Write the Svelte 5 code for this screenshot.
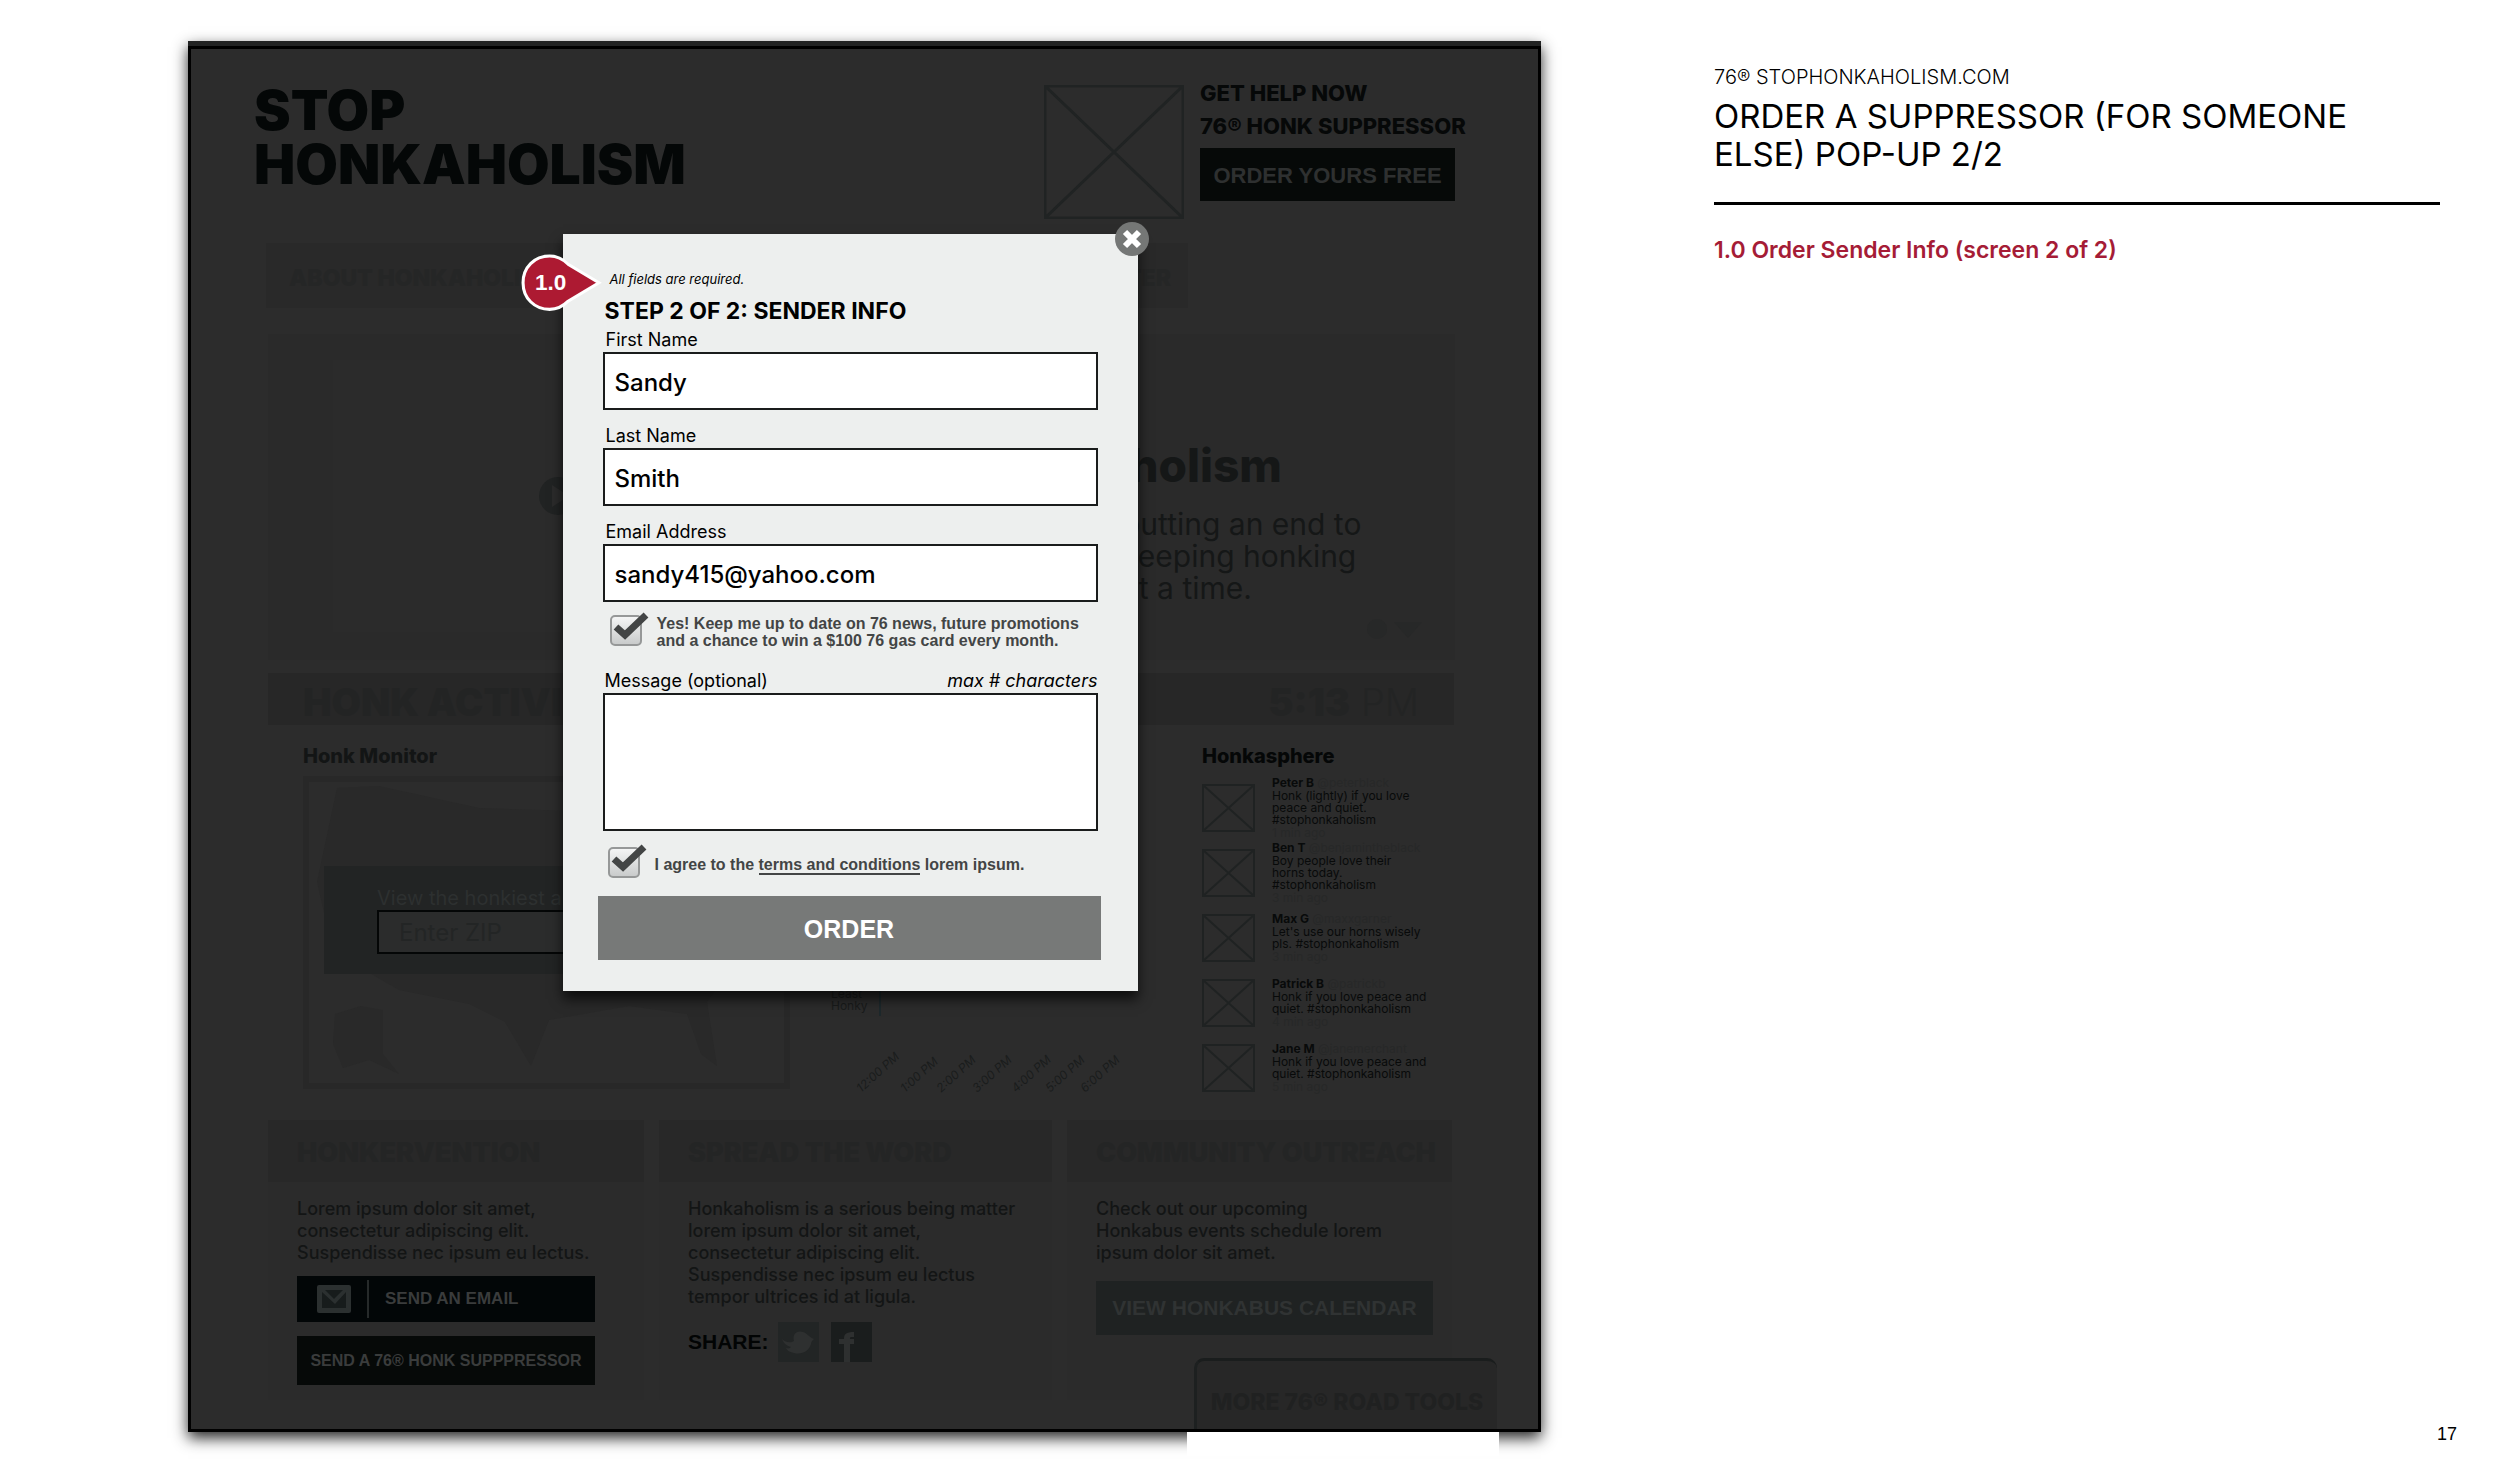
<script>
    let firstName = "Sandy";
    let lastName = "Smith";
    let email = "sandy415@yahoo.com";
    let message = "";
    let keepUpdated = true;
    let agreed = true;
    let isPopupVisible = true;

    const tweets = [
        { name: "Peter B", handle: "@peterblack", text: "Honk (lightly) if you love\npeace and quiet.\n#stophonkaholism", time: "1 min ago" },
        { name: "Ben T", handle: "@benjamintheblack", text: "Boy people love their\nhorns today.\n#stophonkaholism", time: "3 min ago" },
        { name: "Max G", handle: "@maxxgarner", text: "Let's use our horns wisely\npls. #stophonkaholism", time: "3 min ago" },
        { name: "Patrick B", handle: "@patrickb", text: "Honk if you love peace and\nquiet. #stophonkaholism", time: "4 min ago" },
        { name: "Jane M", handle: "@janemerchant", text: "Honk if you love peace and\nquiet. #stophonkaholism", time: "5 min ago" },
    ];

    const hours = [
        { x: 31, label: "12:00 PM" },
        { x: 75, label: "1:00 PM" },
        { x: 111, label: "2:00 PM" },
        { x: 147, label: "3:00 PM" },
        { x: 186, label: "4:00 PM" },
        { x: 220, label: "5:00 PM" },
        { x: 255, label: "6:00 PM" },
    ];

    function closePopup() {
        isPopupVisible = false;
    }
</script>

<main>
    <section class="board">
        <div class="strip"></div>
        <div class="page">
            <header>
                <h1>STOP<br />HONKAHOLISM</h1>
                <div class="help">
                    <svg class="placeholder" viewBox="0 0 140 134" preserveAspectRatio="none">
                        <path d="M1 1H139V133H1ZM1 1L139 133M139 1L1 133" />
                    </svg>
                    <div class="help-text">
                        <p>GET HELP NOW</p>
                        <p>76® HONK SUPPRESSOR</p>
                        <button class="dark-button order-free">ORDER YOURS FREE</button>
                    </div>
                </div>
            </header>

            <nav>
                <a href="#about">ABOUT HONKAHOLISM</a>
                <a href="#meter">HONKOMETER</a>
            </nav>

            <div class="hero">
                <div class="video">
                    <svg class="play" viewBox="0 0 40 40">
                        <circle cx="20" cy="20" r="19" />
                        <path d="M14 9L31 20L14 31Z" />
                    </svg>
                </div>
                <div class="hero-copy">
                    <h2>Honkaholism</h2>
                    <p>putting an end to<br />keeping honking<br />at a time.</p>
                    <svg class="pager" viewBox="0 0 60 22">
                        <circle cx="11" cy="11" r="10" />
                        <path d="M28 4H56L42 20Z" />
                    </svg>
                </div>
            </div>

            <div class="activity-bar">
                <span>HONK ACTIVITY</span>
                <span class="clock"><b>5:13</b> PM</span>
            </div>

            <div class="activity">
                <div>
                    <h3 class="soft">Honk Monitor</h3>
                    <div class="map">
                        <svg class="country" viewBox="0 0 475 301" preserveAspectRatio="none">
                            <path d="M28 6L70 4L170 26L300 30L450 24L458 120L420 190L398 220L408 284L392 272L378 232L320 224L240 238L222 284L196 240L160 222L90 208L24 170L8 100Z" />
                            <path d="M26 232L52 224L74 228V272L90 292L60 278L34 286L24 262Z" />
                        </svg>
                        <div class="zip">
                            <label for="zip">View the honkiest areas</label>
                            <input id="zip" placeholder="Enter ZIP" />
                        </div>
                    </div>
                </div>
                <svg class="chart" viewBox="0 0 332 356">
                    <path d="M50 60V272" />
                    <text x="1" y="254">Least</text>
                    <text x="1" y="266">Honky</text>
                    {#each hours as hour}
                        <text class="hour" transform="translate({hour.x} 349) rotate(-42)">{hour.label}</text>
                    {/each}
                </svg>
                <div>
                    <h3>Honkasphere</h3>
                    <ul class="tweets">
                        {#each tweets as tweet}
                            <li>
                                <svg class="avatar" viewBox="0 0 53 48" preserveAspectRatio="none">
                                    <path d="M1 1H52V47H1ZM1 1L52 47M52 1L1 47" />
                                </svg>
                                <div>
                                    <p><b>{tweet.name}</b> <span>{tweet.handle}</span></p>
                                    <p class="tweet-text">{tweet.text}</p>
                                    <p><span>{tweet.time}</span></p>
                                </div>
                            </li>
                        {/each}
                    </ul>
                </div>
            </div>

            <div class="cards">
                <article>
                    <h3>HONKERVENTION</h3>
                    <div class="card-body">
                        <p>Lorem ipsum dolor sit amet,<br />consectetur adipiscing elit.<br />Suspendisse nec ipsum eu lectus.</p>
                        <button class="dark-button email">
                            <svg viewBox="0 0 34 28">
                                <rect width="34" height="28" rx="2" />
                                <path d="M5 7V23H29V7L18 19Z" />
                                <path d="M8 5H26L17 14Z" />
                            </svg>
                            <span>SEND AN EMAIL</span>
                        </button>
                        <button class="dark-button send">SEND A 76® HONK SUPPPRESSOR</button>
                    </div>
                </article>
                <article>
                    <h3>SPREAD THE WORD</h3>
                    <div class="card-body">
                        <p>Honkaholism is a serious being matter<br />lorem ipsum dolor sit amet,<br />consectetur adipiscing elit.<br />Suspendisse nec ipsum eu lectus<br />tempor ultrices id at ligula.</p>
                        <div class="share">
                            <strong>SHARE:</strong>
                            <a href="#twitter" aria-label="Twitter">
                                <svg viewBox="0 0 41 40">
                                    <rect width="41" height="40" fill="#222525" />
                                    <path fill="#2e3030" d="M4 17C8 21 13 21 16 19C14 12 19 8 25 10C29 11 31 15 36 17C34 19 33 20 33 22C31 29 24 33 16 31C11 30 9 28 8 26C11 27 12 26 13 25C9 24 6 22 4 17Z" />
                                </svg>
                            </a>
                            <a href="#facebook" aria-label="Facebook">
                                <svg viewBox="0 0 41 40">
                                    <rect width="41" height="40" fill="#1a1d1d" />
                                    <path fill="#2e3030" d="M13 40V22H8V17H13C13 12 15 10 23 10V15C19 15 19 15 19 17H23V22H19V40Z" />
                                </svg>
                            </a>
                        </div>
                    </div>
                </article>
                <article>
                    <h3>COMMUNITY OUTREACH</h3>
                    <div class="card-body">
                        <p>Check out our upcoming<br />Honkabus events schedule lorem<br />ipsum dolor sit amet.</p>
                        <button class="dark-button calendar">VIEW HONKABUS CALENDAR</button>
                    </div>
                </article>
            </div>

            <a class="tools-tab" href="#tools">MORE 76® ROAD TOOLS</a>
        </div>
        <div class="tab-patch"></div>

        {#if isPopupVisible}
            <form class="popup" on:submit|preventDefault>
                <svg class="marker" viewBox="0 0 80 56">
                    <path d="M28 2C13 2 2 13 2 28S13 54 28 54C36 54 42 50 46 46L76 28L46 10C42 6 36 2 28 2Z" />
                    <text x="29" y="35">1.0</text>
                </svg>
                <button type="button" class="close" aria-label="Close" on:click={closePopup}>
                    <svg viewBox="0 0 34 34">
                        <circle cx="17" cy="17" r="17" />
                        <path d="M10 10L24 24M24 10L10 24" />
                    </svg>
                </button>

                <p class="required">All fields are required.</p>
                <h2>STEP 2 OF 2: SENDER INFO</h2>

                <div class="fields">
                    <div class="field">
                        <label for="first">First Name</label>
                        <input id="first" bind:value={firstName} />
                    </div>
                    <div class="field">
                        <label for="last">Last Name</label>
                        <input id="last" bind:value={lastName} />
                    </div>
                    <div class="field">
                        <label for="email">Email Address</label>
                        <input id="email" bind:value={email} />
                    </div>
                </div>

                <div class="check-row">
                    <div class="check">
                        <input type="checkbox" id="updates" bind:checked={keepUpdated} />
                        {#if keepUpdated}
                            <svg viewBox="0 0 40 36"><path d="M6 17L15 25L36 5" /></svg>
                        {/if}
                    </div>
                    <label for="updates">Yes! Keep me up to date on 76 news, future promotions<br />and a chance to win a $100 76 gas card every month.</label>
                </div>

                <div class="message-head">
                    <label for="message">Message (optional)</label>
                    <em>max # characters</em>
                </div>
                <textarea id="message" bind:value={message}></textarea>

                <div class="check-row agree">
                    <div class="check">
                        <input type="checkbox" id="agree" bind:checked={agreed} />
                        {#if agreed}
                            <svg viewBox="0 0 40 36"><path d="M6 17L15 25L36 5" /></svg>
                        {/if}
                    </div>
                    <label for="agree">I agree to the <a href="#terms">terms and conditions</a> lorem ipsum.</label>
                </div>

                <button class="order">ORDER</button>
            </form>
        {/if}
    </section>

    <aside>
        <p class="site">76® STOPHONKAHOLISM.COM</p>
        <h2>ORDER A SUPPRESSOR (FOR SOMEONE ELSE) POP-UP 2/2</h2>
        <p class="note">1.0 Order Sender Info (screen 2 of 2)</p>
        <p class="page-number">17</p>
    </aside>
</main>

<style>
    :global(body) {
        background: white;
    }
    main {
        display: grid;
        grid-template-columns: minmax(0, 1353fr) minmax(0, 743fr);
        column-gap: 173px;
        padding: 41px 43px 41px 188px;
        font-family: Inter, "Open Sans", sans-serif;
        color: black;
    }
    main * {
        box-sizing: border-box;
    }
    h1, h2, h3, p, ul {
        margin: 0;
        padding: 0;
    }
    a {
        color: inherit;
        text-decoration: none;
    }
    svg {
        display: block;
    }
    button {
        border: none;
        font-family: "Liberation Sans", Arial, sans-serif;
        font-weight: bold;
        white-space: nowrap;
        cursor: pointer;
    }

    /* dimmed site */
    .board {
        position: relative;
        box-shadow: 0 6px 14px rgba(0, 0, 0, 0.85);
    }
    .strip {
        height: 5px;
        background: #222323;
    }
    .page {
        position: relative;
        border: 3px solid black;
        background: #2c2c2c;
        padding: 28px 0 29px;
    }
    header {
        display: flex;
        justify-content: space-between;
        padding: 0 76px 0 63px;
    }
    h1 {
        margin-top: 6px;
        font-size: 55px;
        line-height: 54px;
        font-weight: 900;
        color: #040707;
    }
    .help {
        display: flex;
        gap: 16px;
    }
    .placeholder {
        width: 140px;
        height: 134px;
        margin-top: 8px;
    }
    .placeholder path {
        fill: none;
        stroke: #202323;
        stroke-width: 3;
    }
    .help-text {
        width: 262px;
        font-size: 22px;
        line-height: 33px;
        font-weight: 800;
        color: #060808;
        white-space: nowrap;
    }
    .dark-button {
        display: block;
        background: #060908;
        color: #3a3c3c;
        padding: 0;
    }
    .order-free {
        width: 255px;
        height: 53px;
        margin-top: 5px;
        padding-top: 3px;
        font-size: 22px;
        color: #2e3030;
    }
    nav {
        display: flex;
        justify-content: space-between;
        align-items: center;
        height: 65px;
        margin: 24px 350px 0 75px;
        padding: 4px 17px 0 23px;
        background: #292929;
        color: #252626;
        font-size: 23px;
        font-weight: 900;
    }
    .hero {
        display: flex;
        justify-content: space-between;
        height: 326px;
        margin: 26px 83px 0 77px;
        padding: 26px 0 28px 65px;
        background: #2a2a2a;
    }
    .video {
        display: flex;
        align-items: center;
        justify-content: center;
        width: 450px;
        background: #2b2b2b;
    }
    .play {
        width: 40px;
    }
    .play circle {
        fill: #212323;
    }
    .play path {
        fill: #2b2b2b;
    }
    .hero-copy {
        width: 333px;
        color: #151717;
    }
    .hero-copy h2 {
        display: flex;
        justify-content: flex-end;
        width: 160px;
        margin-top: 80px;
        font-size: 46px;
        line-height: 50px;
        font-weight: 800;
    }
    .hero-copy p {
        margin-top: 18px;
        font-size: 30px;
        line-height: 32px;
        white-space: nowrap;
    }
    .pager {
        width: 60px;
        margin: 14px 0 0 244px;
        fill: #272828;
    }
    .activity-bar {
        display: flex;
        justify-content: space-between;
        align-items: center;
        height: 52px;
        margin: 13px 84px 0 77px;
        padding: 6px 35px 0;
        background: #272727;
        color: #232424;
        font-size: 38px;
        font-weight: 900;
    }
    .clock {
        font-weight: 300;
    }
    .clock b {
        font-weight: 900;
    }
    .activity {
        display: grid;
        grid-template-columns: minmax(0, 487fr) minmax(0, 332fr) minmax(0, 252fr);
        gap: 40px;
        margin: 19px 84px 0 112px;
    }
    .activity h3 {
        font-size: 20px;
        line-height: 24px;
        font-weight: 800;
        color: #050707;
    }
    .activity .soft {
        color: #131515;
    }
    .map {
        display: grid;
        height: 313px;
        margin-top: 8px;
        border: 6px solid #282828;
    }
    .country {
        grid-area: 1 / 1;
        width: 100%;
        height: 301px;
        fill: #292929;
    }
    .zip {
        grid-area: 1 / 1;
        height: 108px;
        margin: 84px 15px 0;
        padding: 20px 53px 0;
        background: #222424;
        color: #2d3030;
        font-size: 20px;
        line-height: 24px;
    }
    .zip input {
        width: 100%;
        height: 44px;
        padding: 0 20px;
        border: 2px solid #040606;
        background: #2b2c2c;
        font: inherit;
        font-size: 24px;
    }
    .zip input::placeholder {
        color: #232525;
    }
    .chart {
        width: 100%;
        font-size: 12px;
        fill: #191b1b;
    }
    .chart path {
        stroke: #1d282b;
        stroke-width: 2;
    }
    .hour {
        font-style: italic;
        fill: #1a1c1c;
    }
    .tweets {
        margin-top: 7px;
        list-style: none;
    }
    .tweets li {
        display: flex;
        align-items: center;
        gap: 17px;
        height: 65px;
        font-size: 12px;
        line-height: 14px;
        color: #080a0a;
        white-space: nowrap;
    }
    .tweets span {
        color: #272828;
    }
    .tweets .tweet-text {
        line-height: 12px;
        white-space: pre;
    }
    .avatar {
        flex: none;
        width: 53px;
        height: 48px;
    }
    .avatar path {
        fill: none;
        stroke: #1f2222;
        stroke-width: 2;
    }
    .cards {
        display: grid;
        grid-template-columns: minmax(0, 376fr) minmax(0, 393fr) minmax(0, 385fr);
        gap: 15px;
        margin: 20px 86px 0 77px;
    }
    article {
        height: 280px;
        background: #2b2b2b;
    }
    article h3 {
        height: 62px;
        padding: 2px 0 0 29px;
        background: #282828;
        color: #242525;
        font-size: 27px;
        line-height: 62px;
        font-weight: 900;
        white-space: nowrap;
    }
    .card-body {
        padding: 16px 0 0 29px;
        font-size: 18px;
        line-height: 22px;
        color: #131515;
        white-space: nowrap;
    }
    .card-body p {
        font-weight: 500;
    }
    .email {
        display: flex;
        align-items: center;
        width: 298px;
        height: 46px;
        margin-top: 12px;
        padding-left: 20px;
        background: #020607;
        font-size: 17px;
    }
    .email svg {
        width: 34px;
        height: 28px;
        fill: #2b3030;
    }
    .email path {
        fill: #171c1c;
    }
    .email span {
        margin-left: 16px;
        padding-left: 16px;
        border-left: 2px solid #262a2a;
        line-height: 38px;
    }
    .send {
        width: 298px;
        height: 49px;
        margin-top: 14px;
        font-size: 16px;
    }
    .share {
        display: flex;
        align-items: center;
        margin-top: 14px;
        gap: 12px;
        font-family: "Liberation Sans", Arial, sans-serif;
        font-size: 21px;
        color: #020404;
    }
    .share strong {
        margin-right: -3px;
    }
    .share svg {
        width: 41px;
    }
    .calendar {
        width: 337px;
        height: 54px;
        margin-top: 17px;
        background: #1f2222;
        color: #303333;
        font-size: 21px;
    }
    .tools-tab {
        position: absolute;
        right: 41px;
        bottom: 0;
        width: 303px;
        height: 71px;
        padding-top: 29px;
        border-top: 3px solid #1a1d1d;
        border-left: 3px solid #1d2020;
        border-radius: 10px 10px 0 0;
        background: #272727;
        color: #202121;
        font-size: 23px;
        line-height: 24px;
        font-weight: 800;
        text-align: center;
        white-space: nowrap;
    }
    /* the open tab hides the board's shadow below it */
    .tab-patch {
        position: absolute;
        right: 42px;
        top: 100%;
        width: 312px;
        height: 24px;
        background: white;
    }

    /* popup */
    .popup {
        position: absolute;
        top: 193px;
        left: calc(50% - 302px);
        width: 575px;
        padding: 37px 40px 31px;
        background: #edefee;
        box-shadow: 0 8px 12px rgba(0, 0, 0, 0.7);
    }
    .marker {
        position: absolute;
        top: 20px;
        left: -42px;
        width: 82px;
    }
    .marker path {
        fill: #ad1a32;
        stroke: white;
        stroke-width: 3;
    }
    .marker text {
        fill: white;
        font: bold 22px "Liberation Sans", Arial, sans-serif;
        text-anchor: middle;
    }
    .close {
        position: absolute;
        top: -12px;
        right: -11px;
        width: 34px;
        padding: 0;
        background: none;
    }
    .close circle {
        fill: #757776;
    }
    .close path {
        stroke: white;
        stroke-width: 6;
    }
    .required {
        padding-left: 7px;
        font-size: 13px;
        line-height: 16px;
        font-style: italic;
    }
    .popup h2 {
        margin: 12px 0 7px 2px;
        font-size: 23px;
        line-height: 24px;
        font-weight: 700;
        white-space: nowrap;
    }
    .fields {
        display: grid;
        gap: 16px;
    }
    .field label {
        display: block;
        margin-bottom: 2px;
        padding-left: 3px;
        font-size: 18px;
        line-height: 20px;
    }
    .field input {
        display: block;
        width: 100%;
        height: 58px;
        padding: 2px 10px 0;
        border: 2px solid #1a1c1c;
        background: white;
        color: black;
        font-family: inherit;
        font-size: 24px;
        font-weight: 500;
    }
    .check-row {
        display: flex;
        gap: 15px;
        margin-top: 13px;
        padding-left: 7px;
        color: #434545;
        font-family: "Liberation Sans", Arial, sans-serif;
        font-size: 16px;
        line-height: 17px;
        font-weight: bold;
        white-space: nowrap;
    }
    .check {
        position: relative;
        width: 32px;
        height: 31px;
    }
    .check input {
        display: block;
        appearance: none;
        width: 32px;
        height: 31px;
        margin: 0;
        border: 2px solid #969898;
        border-radius: 5px;
        background: linear-gradient(#f4f5f5, #c9cbcb);
    }
    .check svg {
        position: absolute;
        top: -5px;
        left: 0;
        width: 40px;
        pointer-events: none;
    }
    .check path {
        fill: none;
        stroke: #434545;
        stroke-width: 7;
    }
    .message-head {
        display: flex;
        justify-content: space-between;
        margin: 22px 0 2px;
        padding-left: 2px;
        font-size: 18px;
        line-height: 20px;
    }
    textarea {
        display: block;
        width: 100%;
        height: 138px;
        padding: 10px;
        border: 2px solid #1a1c1c;
        background: white;
        font: inherit;
        font-size: 24px;
        resize: none;
    }
    .agree {
        align-items: center;
        margin-top: 16px;
        padding-left: 5px;
    }
    .agree label {
        padding-top: 3px;
    }
    .agree a {
        border-bottom: 2px solid #434545;
    }
    .order {
        display: block;
        width: 503px;
        height: 64px;
        margin: 18px -4px 0 -5px;
        padding: 2px 0 0;
        background: #777978;
        color: white;
        font-size: 25px;
    }

    /* annotations */
    aside {
        display: flex;
        flex-direction: column;
        padding: 23px 17px 0 0;
    }
    .site {
        font-size: 20px;
        line-height: 26px;
        font-weight: 300;
    }
    aside h2 {
        padding: 7px 0 29px;
        border-bottom: 3px solid black;
        font-size: 33px;
        line-height: 38px;
        font-weight: 400;
    }
    .note {
        margin-top: 32px;
        color: #a51c36;
        font-size: 23px;
        line-height: 26px;
        font-weight: 600;
    }
    .page-number {
        margin: auto -17px -12px 0;
        font-family: "Liberation Sans", Arial, sans-serif;
        font-size: 18px;
        line-height: 20px;
        text-align: right;
    }
</style>
